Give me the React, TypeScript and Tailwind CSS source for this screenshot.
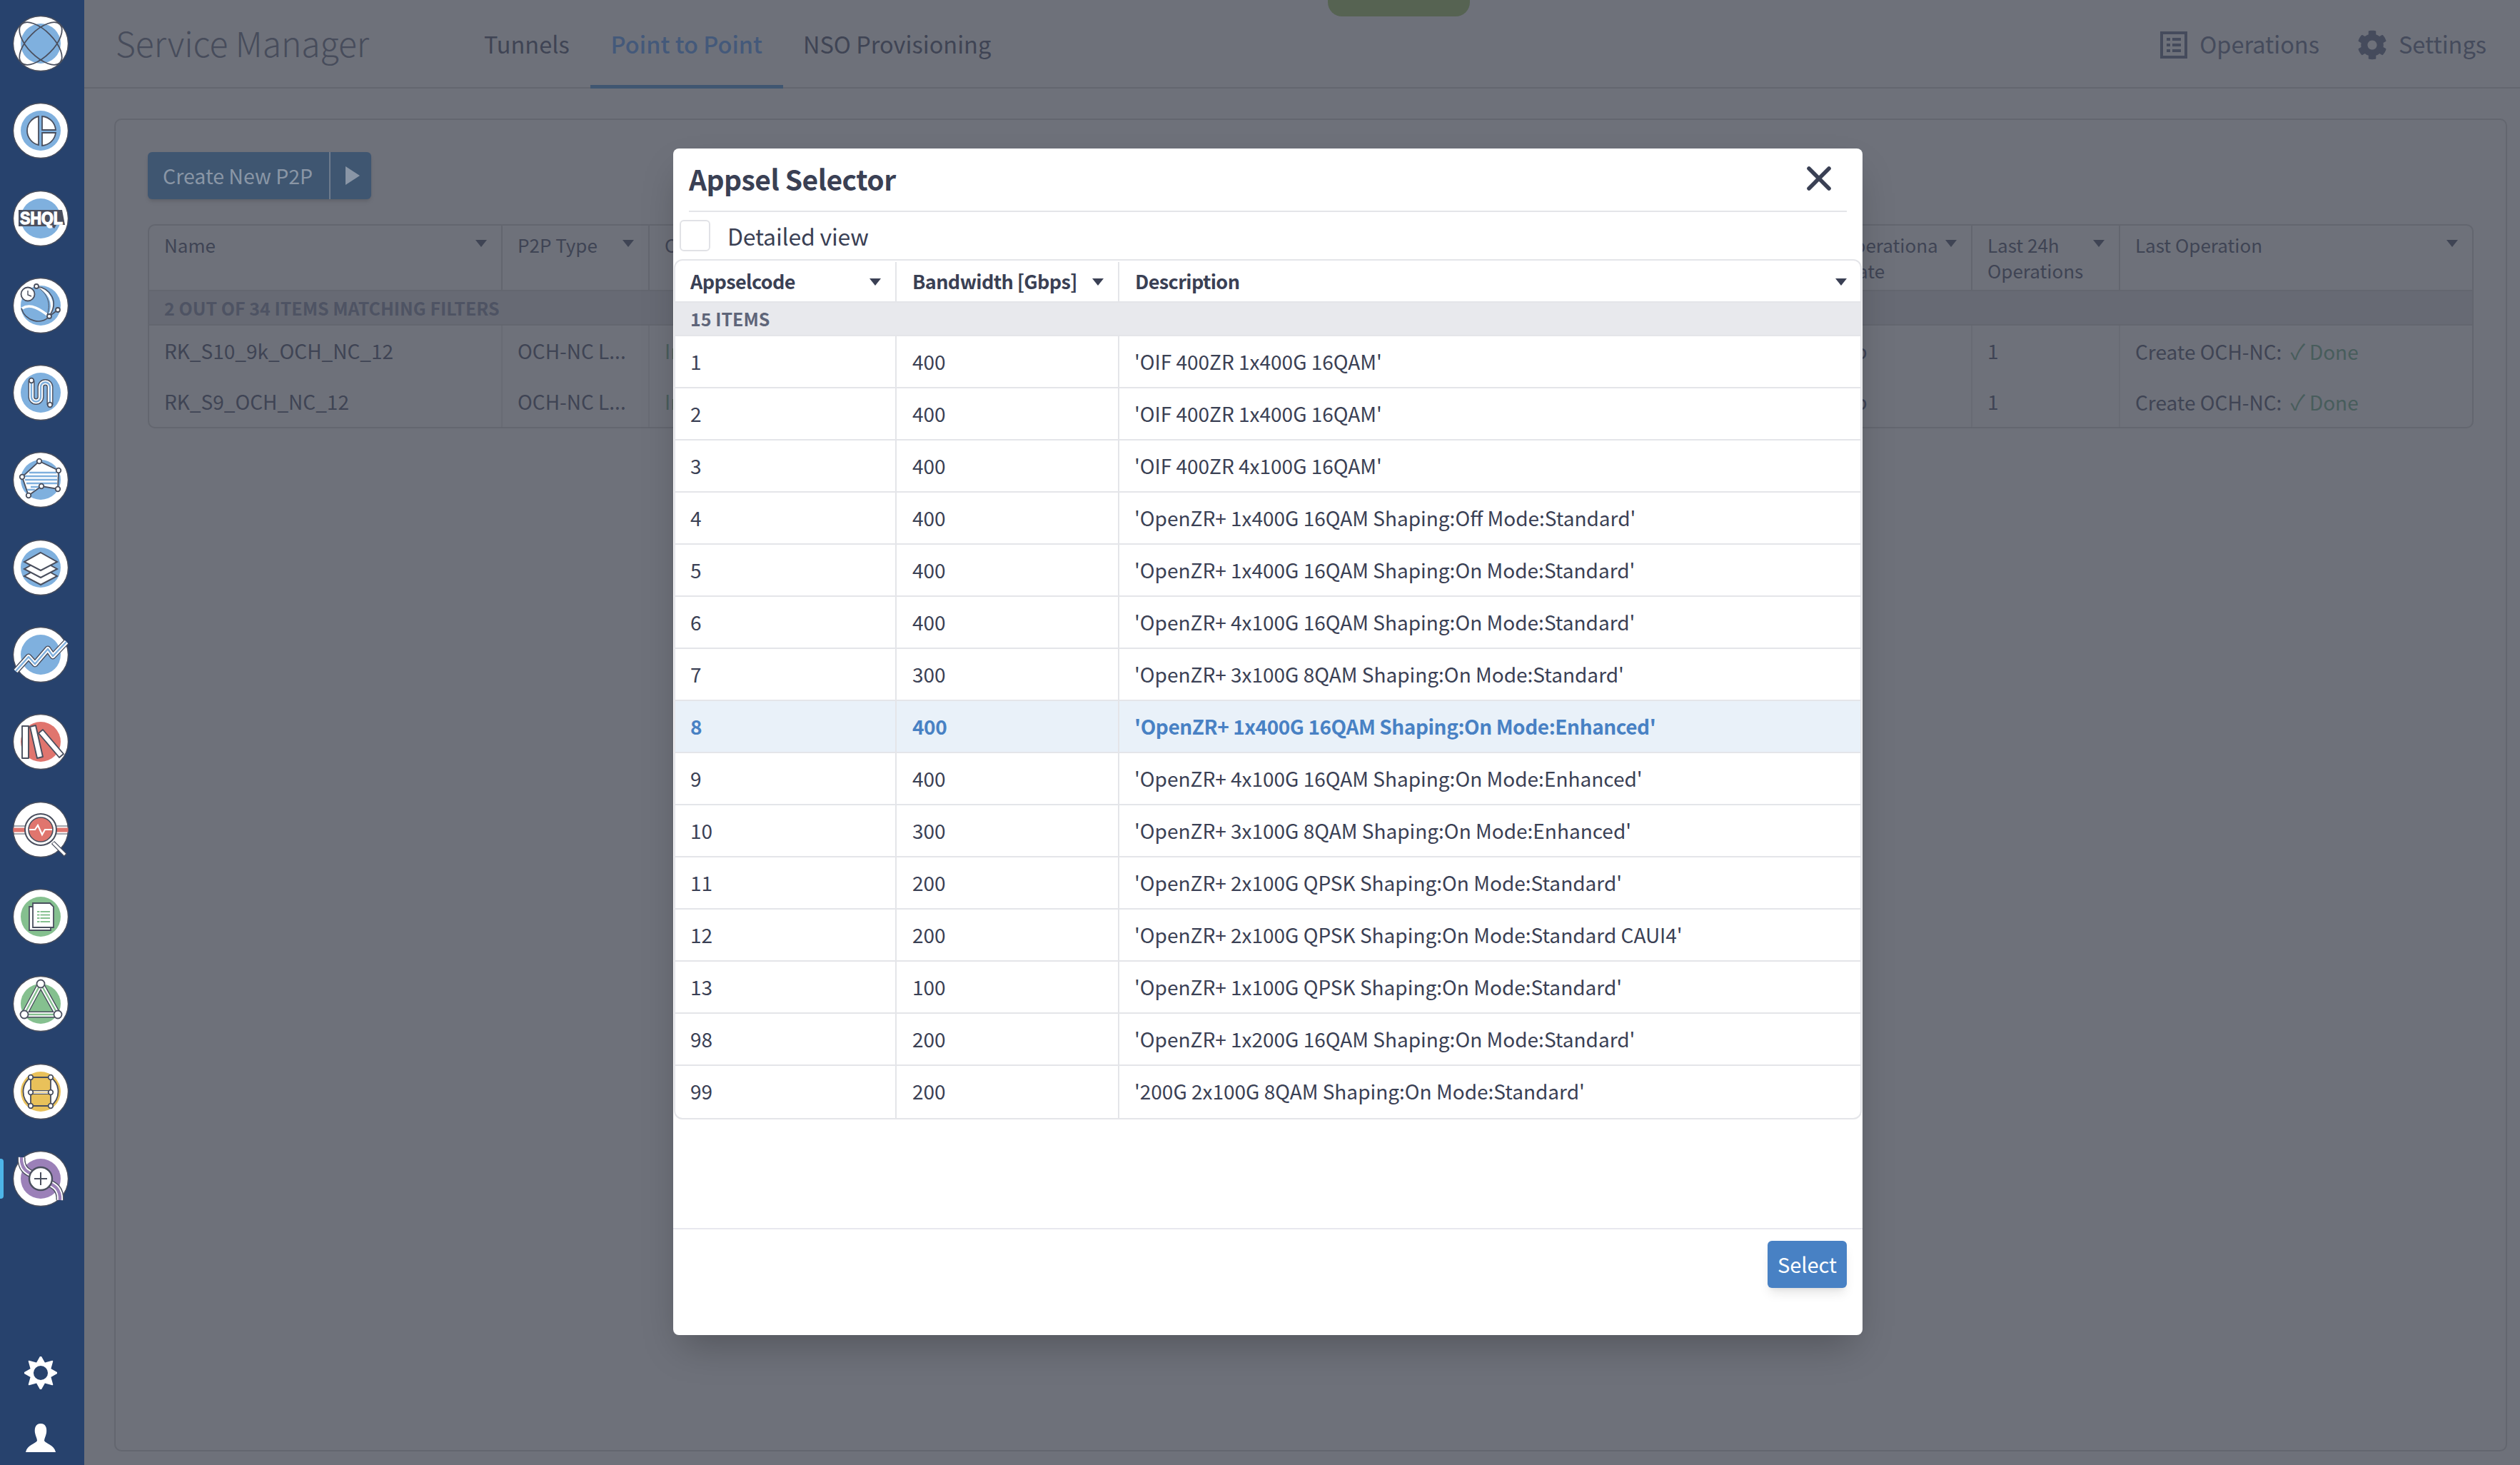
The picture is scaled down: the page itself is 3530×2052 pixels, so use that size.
import { X } from "lucide-react";
import { FaCog } from "react-icons/fa";

const D = "#4a4f5e";
const BLUE = "#7fb0de";
const RED = "#e0756e";
const GREEN = "#85c08f";
const YELLOW = "#e9c15a";
const PURPLE = "#9b80b8";

const appsels = [
  ["1", "400", "'OIF 400ZR 1x400G 16QAM'"],
  ["2", "400", "'OIF 400ZR 1x400G 16QAM'"],
  ["3", "400", "'OIF 400ZR 4x100G 16QAM'"],
  ["4", "400", "'OpenZR+ 1x400G 16QAM Shaping:Off Mode:Standard'"],
  ["5", "400", "'OpenZR+ 1x400G 16QAM Shaping:On Mode:Standard'"],
  ["6", "400", "'OpenZR+ 4x100G 16QAM Shaping:On Mode:Standard'"],
  ["7", "300", "'OpenZR+ 3x100G 8QAM Shaping:On Mode:Standard'"],
  ["8", "400", "'OpenZR+ 1x400G 16QAM Shaping:On Mode:Enhanced'"],
  ["9", "400", "'OpenZR+ 4x100G 16QAM Shaping:On Mode:Enhanced'"],
  ["10", "300", "'OpenZR+ 3x100G 8QAM Shaping:On Mode:Enhanced'"],
  ["11", "200", "'OpenZR+ 2x100G QPSK Shaping:On Mode:Standard'"],
  ["12", "200", "'OpenZR+ 2x100G QPSK Shaping:On Mode:Standard CAUI4'"],
  ["13", "100", "'OpenZR+ 1x100G QPSK Shaping:On Mode:Standard'"],
  ["98", "200", "'OpenZR+ 1x200G 16QAM Shaping:On Mode:Standard'"],
  ["99", "200", "'200G 2x100G 8QAM Shaping:On Mode:Standard'"],
];

const p2ps = ["RK_S10_9k_OCH_NC_12", "RK_S9_OCH_NC_12"];

function Badge({ fill, children }: { fill: string; children: React.ReactNode }) {
  return (
    <svg viewBox="-40 -40 80 80" className="w-[80px] h-[80px] block">
      <circle r="38.5" fill="#fff" stroke={D} strokeWidth="1.4" />
      <circle r="28" fill={fill} />
      {children}
    </svg>
  );
}

function Node({ x, y, r = 3.3 }: { x: number; y: number; r?: number }) {
  return <circle cx={x} cy={y} r={r} fill="#fff" stroke={D} strokeWidth="1.8" />;
}

// pipes in the logos are the same line drawn three times
function Pipe({ d, mid, w = 9 }: { d: string; mid: string; w?: number }) {
  return (
    <g fill="none" strokeLinejoin="round">
      <path d={d} stroke={D} strokeWidth={w} />
      <path d={d} stroke="#fff" strokeWidth={w - 2.8} />
      <path d={d} stroke={mid} strokeWidth={w - 6.6} />
    </g>
  );
}

const sideIcons = [
  <Badge fill={BLUE} key="atom">
    <g fill="none" stroke={D} strokeWidth="1.8">
      <ellipse rx="38" ry="18" transform="rotate(45)" />
      <ellipse rx="38" ry="18" transform="rotate(-45)" />
    </g>
  </Badge>,
  <Badge fill={BLUE} key="pie">
    <g fill="#fff" stroke={D} strokeWidth="1.8">
      <path d="M-3,-20 A20.5,20.5 0 0 0 -3,20 Z" />
      <path d="M2,-20 A20.5,20.5 0 0 1 21,-1 L2,-1 Z" />
      <path d="M2,3 L21,3 A20.5,20.5 0 0 1 2,21 Z" />
    </g>
  </Badge>,
  <Badge fill={BLUE} key="shql">
    <path d="M-31,-12 H30 L34,9 H22 L19,14 L15,11 H-31 Z" fill={D} />
    <text
      x="1"
      y="8"
      textAnchor="middle"
      fontFamily="'Liberation Sans', sans-serif"
      fontWeight="700"
      fontSize="23"
      fill="#fff"
      stroke="#fff"
      strokeWidth="1.3"
      textLength="60"
      lengthAdjust="spacingAndGlyphs"
    >
      SHQL
    </text>
  </Badge>,
  <Badge fill={BLUE} key="globe">
    <path d="M-26,4 C-14,-4 0,6 12,15" fill="none" stroke="#fff" strokeWidth="3.5" />
    <path d="M-6,-27 C10,-22 22,-5 12,15" fill="none" stroke="#fff" strokeWidth="3.5" />
    <path d="M-6,-27 C14,-24 26,-6 12,15 M-27,4 C-22,22 2,28 12,15 L24,6" fill="none" stroke={D} strokeWidth="1.6" />
    <path d="M-6,-27 C6,-20 16,-6 9,13" fill="none" stroke={D} strokeWidth="1" />
    <circle cx="-18" cy="-16" r="9.5" fill="#fff" stroke={D} strokeWidth="1.8" />
    <path d="M-18,-21 V-15 L-13,-13" fill="none" stroke={D} strokeWidth="1.4" />
    <Node x={-6} y={-27} r={3} />
    <Node x={24} y={6} r={3} />
    <Node x={12} y={15} r={3} />
  </Badge>,
  <Badge fill={BLUE} key="pipe">
    <Pipe d="M-13,-17 V6 A6.5,6.5 0 0 0 0,6 V-8 A6.5,6.5 0 0 1 13,-8 V17" mid={BLUE} />
    <Node x={-13} y={-17} />
    <Node x={13} y={17} />
  </Badge>,
  <Badge fill={BLUE} key="poly">
    <path d="M-2,-26 L25,-13 L24,13 L1,9 L-17,22 L-26,-4 Z" fill="#fff" stroke={D} strokeWidth="1.8" />
    <path d="M-16,-10 H22 M-22,-5 H23 M-22,0 H23 M-20,5 H23 M-14,10 H-3 M-19,14 H-8" stroke={BLUE} strokeWidth="2.4" />
    <Node x={-2} y={-26} />
    <Node x={25} y={-13} />
    <Node x={24} y={13} />
    <Node x={1} y={9} />
    <Node x={-17} y={22} />
    <Node x={-26} y={-4} />
  </Badge>,
  <Badge fill={BLUE} key="layers">
    <g fill="#fff" stroke={D} strokeWidth="2">
      <path d="M0,-1 L23,12 L0,24 L-23,12 Z" />
      <path d="M0,-11 L23,2 L0,14 L-23,2 Z" />
      <path d="M0,-21 L23,-8 L0,4 L-23,-8 Z" />
    </g>
  </Badge>,
  <Badge fill={BLUE} key="trend">
    <Pipe d="M-35,23 L-17,3 L-8,13 L10,-8 L17,2 L36,-18" mid={BLUE} />
  </Badge>,
  <Badge fill={RED} key="books">
    <g fill="#fff" stroke={D} strokeWidth="1.9" strokeLinejoin="round">
      <path d="M-26,-22 H-17 V23 H-26 Z" />
      <path d="M-15,-21 L-7,-23 L3,21 L-5,23 Z" />
      <path d="M-3,-12 L3,-17 L32,17 L26,22 Z" />
    </g>
  </Badge>,
  <svg viewBox="-40 -40 80 80" className="w-[80px] h-[80px] block" key="scope">
    <circle r="38.5" fill="#fff" stroke={D} strokeWidth="1.4" />
    <path d="M-39,-5 H-22 M22,-5 H39 M-39,6 H-22 M22,6 H39" stroke={D} strokeWidth="1.2" />
    <path d="M-38.5,0.5 H-22 M22,0.5 H38.5" stroke={RED} strokeWidth="6" />
    <circle r="22" fill="#fff" stroke={D} strokeWidth="2" />
    <circle r="17" fill={RED} stroke={D} strokeWidth="1.6" />
    <path d="M-16,0 H-8 L-4,-6 L2,7 L6,0 H16" fill="none" stroke="#fff" strokeWidth="2.2" />
    <path d="M17,18 L35,36" stroke={D} strokeWidth="6" />
    <path d="M17.5,18.5 L34,35" stroke="#fff" strokeWidth="3.4" />
  </svg>,
  <Badge fill={GREEN} key="docs">
    <path d="M-16,-14 H14 V19 H-16 Z" fill="#fff" stroke={D} strokeWidth="1.8" />
    <path d="M-11,-19 H13 L18,-14 V15 H-11 Z" fill="#fff" stroke={D} strokeWidth="1.8" />
    <path d="M-5,-7 H13 M-5,-2.5 H13 M-5,2 H13 M-5,7 H13" stroke={GREEN} strokeWidth="2.2" />
    <path d="M-1,-9 V9" stroke="#fff" strokeWidth="1.2" />
  </Badge>,
  <Badge fill={GREEN} key="tri">
    <Pipe d="M0,-28 L-23,15 H24 Z" mid={GREEN} />
    <Node x={0} y={-28} r={5.5} />
    <Node x={-23} y={15} r={5.5} />
    <Node x={24} y={15} r={5.5} />
  </Badge>,
  <Badge fill={YELLOW} key="frame">
    <path d="M-14,-20 C-28,-10 -28,10 -14,20 M14,-20 C28,-10 28,10 14,20" fill="#fff" stroke={D} strokeWidth="1.8" />
    <path d="M-14,-20 H14 V20 H-14 Z" fill={YELLOW} stroke={D} strokeWidth="1.8" />
    <path d="M-14,1 H14" stroke={D} strokeWidth="6" />
    <path d="M-14,1 H14" stroke="#fff" strokeWidth="3.6" />
    <path d="M-10,1 H10" stroke={YELLOW} strokeWidth="1.2" />
    <Node x={-14} y={-20} />
    <Node x={14} y={-20} />
    <Node x={-14} y={1} />
    <Node x={14} y={1} />
    <Node x={-14} y={20} />
    <Node x={14} y={20} />
  </Badge>,
  <Badge fill={PURPLE} key="plus">
    <Pipe d="M-27,-30 C-28,-10 -14,-8 -6,-3" mid={PURPLE} w={11} />
    <Pipe d="M6,3 C14,8 28,10 27,30" mid={PURPLE} w={11} />
    <circle r="16" fill="#fff" stroke={D} strokeWidth="2.4" />
    <path d="M-9,0 H9 M0,-9 V9" stroke={D} strokeWidth="2" />
  </Badge>,
];

function Caret({ color }: { color: string }) {
  return (
    <svg viewBox="0 0 16 10" className="w-[16px] h-[10px] shrink-0">
      <path d="M0,0 H16 L8,10 Z" fill={color} />
    </svg>
  );
}

function BgHead({ label, className }: { label: string; className: string }) {
  return (
    <div className={`flex items-start border-r-2 border-[#63666f] pt-[9px] pl-[21px] pr-[20px] leading-[36px] ${className}`}>
      <span className="flex-1 min-w-0 mr-[10px] overflow-hidden">{label}</span>
      <span className="mt-[11px]">
        <Caret color="#3f4454" />
      </span>
    </div>
  );
}

function SideCog() {
  const pts: string[] = [];
  for (let i = 0; i < 16; i++) {
    const a = (i * Math.PI) / 8 - Math.PI / 2;
    const r = i % 2 === 0 ? 24 : 15;
    pts.push(`${(r * Math.cos(a)).toFixed(1)},${(r * Math.sin(a)).toFixed(1)}`);
  }
  return (
    <svg viewBox="-24 -24 48 48" className="w-[46px] h-[46px]">
      <polygon points={pts.join(" ")} fill="#fff" stroke="#fff" strokeWidth="2" strokeLinejoin="round" />
      <circle r="10.5" fill="#27426d" />
    </svg>
  );
}

export default function App() {
  return (
    <div
      className="relative flex w-[3530px] h-[2052px] overflow-hidden bg-[#6e717a] text-[28px] text-[#3f4454]"
      style={{ fontFamily: "'Noto Sans CJK JP', 'Noto Sans', sans-serif" }}
    >
      {/* Sidebar */}
      <div className="flex flex-col justify-between items-center w-[118px] shrink-0 bg-[#27426d] pt-[21px] pb-[18px] pr-[4px]">
        <div className="flex flex-col items-center gap-[42.3px] w-full">
          {sideIcons.map((icon, i) => (
            <div key={i} className="relative flex justify-center w-full">
              {i === sideIcons.length - 1 && (
                <div className="absolute left-0 top-[12px] w-[5px] h-[56px] rounded-r-[4px] bg-[#4db5e8]" />
              )}
              {icon}
            </div>
          ))}
        </div>
        <div className="flex flex-col items-center gap-[48px]">
          <SideCog />
          <svg viewBox="0 0 42 40" className="w-[42px] h-[40px]">
            <path
              d="M21,0 C28,0 30,6 29,13 C28,18 26,21 26,24 C28,28 40,30 42,40 H0 C2,30 14,28 16,24 C16,21 14,18 13,13 C12,6 14,0 21,0 Z"
              fill="#fff"
            />
          </svg>
        </div>
      </div>

      {/* Main */}
      <div className="flex-1 min-w-0 flex flex-col">
        <div className="relative flex items-stretch h-[124px] shrink-0 border-b-2 border-[#63666f]">
          <div className="absolute left-[1742px] top-0 w-[199px] h-[23px] rounded-b-[20px] bg-[#566352]" />
          <div className="w-[560px] pl-[44px] pt-[24px] text-[48px] leading-[70px] font-light text-[#474c5b]">
            Service Manager
          </div>
          <div className="flex text-[32.5px] leading-[50px]">
            <div className="pt-[36px] mr-[29px]">Tunnels</div>
            <div className="px-[29px] pt-[36px] mb-[-2px] border-b-[5px] border-[#3f5671] text-[#44597a] font-medium">
              Point to Point
            </div>
            <div className="pl-[28px] pt-[36px]">NSO Provisioning</div>
          </div>
          <div className="flex-1" />
          <div className="flex items-start pt-[36px] pr-[47px] text-[32.5px] leading-[50px] text-[#454b5c]">
            <svg viewBox="0 0 38 38" className="w-[38px] h-[38px] mt-[8px] mr-[17px]">
              <path
                d="M0,0 H38 V38 H0 Z M4,4 V34 H34 V4 Z M9,9 H14 V13 H9 Z M17,9 H29 V13 H17 Z M9,17 H14 V21 H9 Z M17,17 H29 V21 H17 Z M9,25 H14 V29 H9 Z M17,25 H29 V29 H17 Z"
                fill="#454b5c"
                fillRule="evenodd"
              />
            </svg>
            <span className="mr-[53px]">Operations</span>
            <FaCog className="w-[42px] h-[42px] mt-[6px] mr-[16px]" />
            <span>Settings</span>
          </div>
        </div>

        <div className="flex-1 min-h-0 ml-[42px] mt-[42px] mr-[18px] mb-[19px] border-2 border-[#63666f] rounded-[10px] px-[45px] pt-[45px]">
          <div className="flex w-[313px] h-[66px] rounded-[6px] bg-[#3f5671] text-[#8a96a6] text-[28.5px] leading-[66px] shadow-md">
            <div className="w-[256px] pl-[21px] border-r-2 border-[#6e7b8d] whitespace-nowrap">Create New P2P</div>
            <div className="flex-1 flex items-center justify-center pl-[5px]">
              <svg viewBox="0 0 20 26" className="w-[20px] h-[26px]">
                <path d="M0,0 L20,13 L0,26 Z" fill="#8a96a6" />
              </svg>
            </div>
          </div>

          <div className="mt-[35px] border-2 border-[#63666f] rounded-[10px]">
            <div className="flex h-[92px] border-b-2 border-[#63666f] text-[26px]">
              <BgHead label="Name" className="w-[495px]" />
              <BgHead label="P2P Type" className="w-[206px]" />
              <BgHead label="Config State" className="w-[1647px]" />
              <BgHead label="Operational State" className="w-[206px]" />
              <BgHead label="Last 24h Operations" className="w-[207px]" />
              <div className="flex flex-1 items-start pt-[9px] pl-[21px] pr-[20px] leading-[36px]">
                <span className="flex-1">Last Operation</span>
                <span className="mt-[11px]">
                  <Caret color="#3f4454" />
                </span>
              </div>
            </div>
            <div className="h-[48px] pl-[21px] leading-[46px] bg-[#676a74] border-b-2 border-[#63666f] font-semibold text-[#4e5363] text-[25px]">
              2 OUT OF 34 ITEMS MATCHING FILTERS
            </div>
            {p2ps.map((name) => (
              <div key={name} className="flex h-[71px] leading-[71px]">
                <div className="w-[495px] pl-[21px] border-r-2 border-[#686b74]">{name}</div>
                <div className="w-[206px] pl-[21px] border-r-2 border-[#686b74]">OCH-NC L...</div>
                <div className="w-[1647px] pl-[21px] border-r-2 border-[#686b74] text-[#485d5c]">In Sync</div>
                <div className="w-[206px] pl-[21px] border-r-2 border-[#686b74]">Up</div>
                <div className="w-[207px] pl-[21px] border-r-2 border-[#686b74]">1</div>
                <div className="flex-1 pl-[21px]">
                  Create OCH-NC:
                  <span className="ml-[12px] text-[#485d5c]">
                    <span className="text-[30px] mr-[6px]">✓</span>Done
                  </span>
                </div>
              </div>
            ))}
          </div>
        </div>
      </div>

      {/* Appsel dialog */}
      <div className="absolute left-[943px] top-[208px] w-[1666px] h-[1662px] flex flex-col rounded-[8px] bg-white text-[#3a4054] shadow-2xl">
        <div className="relative mx-[22px] h-[89px] border-b-2 border-[#e4e5e9] text-[39px] tracking-[-0.5px] font-semibold leading-[84px]">
          Appsel Selector
          <X className="absolute right-[11px] top-[14px] w-[56px] h-[56px]" strokeWidth={2.4} />
        </div>
        <div className="flex items-center h-[66px] pl-[9px]">
          <div className="w-[43px] h-[44px] rounded-[6px] border-2 border-[#e1e2e6]" />
          <span className="ml-[24px] text-[32px] tracking-[-0.2px]">Detailed view</span>
        </div>
        <div className="mx-[1px] border-2 border-[#e4e5e9] rounded-[12px] text-[28px]">
          <div className="flex h-[59px] pt-[2px] border-b-2 border-[#e4e5e9] font-semibold text-[27px] tracking-[-0.6px]">
            <div className="flex items-center w-[310px] pl-[21px] pr-[20px] border-r-2 border-[#e4e5e9]">
              <span className="flex-1 whitespace-nowrap">Appselcode</span>
              <Caret color="#3a4054" />
            </div>
            <div className="flex items-center w-[312px] pl-[22px] pr-[20px] border-r-2 border-[#e4e5e9]">
              <span className="flex-1 whitespace-nowrap">Bandwidth [Gbps]</span>
              <Caret color="#3a4054" />
            </div>
            <div className="flex flex-1 items-center pl-[22px] pr-[19px]">
              <span className="flex-1">Description</span>
              <Caret color="#3a4054" />
            </div>
          </div>
          <div className="h-[47px] pl-[21px] leading-[44px] bg-[#e8e9ed] border-b-2 border-[#e4e5e9] font-semibold text-[#5e6579] text-[25px]">
            15 ITEMS
          </div>
          {appsels.map(([code, band, desc], i) => {
            const selected = code === "8";
            return (
              <div
                key={code}
                className={`flex h-[73px] leading-[71px] ${i < appsels.length - 1 ? "border-b-2 border-[#e4e5e9]" : ""} ${
                  selected ? "bg-[#e9f1f9] text-[#4881c4] font-semibold tracking-[-0.43px]" : ""
                }`}
              >
                <div className="w-[310px] pl-[21px] border-r-2 border-[#e4e5e9]">{code}</div>
                <div className="w-[312px] pl-[22px] border-r-2 border-[#e4e5e9]">{band}</div>
                <div className="flex-1 pl-[21px]">{desc}</div>
              </div>
            );
          })}
        </div>
        <div className="mt-[152px] border-t-2 border-[#e8e8ee] flex justify-end pt-[16px] pr-[22px]">
          <button className="w-[111px] h-[66px] rounded-[6px] bg-[#4881c4] text-white text-[29px] shadow-lg">Select</button>
        </div>
      </div>
    </div>
  );
}
